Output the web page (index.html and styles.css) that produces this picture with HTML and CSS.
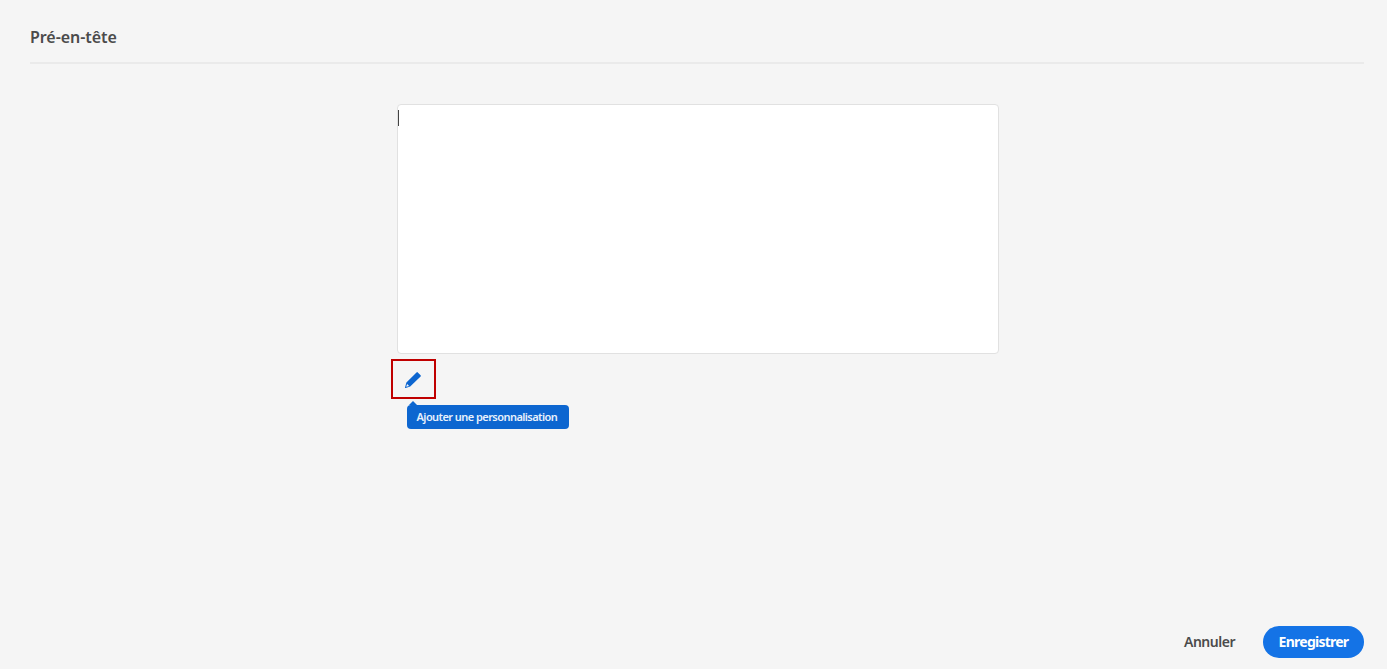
FILE: index.html
```html
<!DOCTYPE html>
<html lang="fr">
<head>
<meta charset="utf-8">
<title>Pré-en-tête</title>
<link rel="stylesheet" href="styles.css">
</head>
<body>
<main class="dialog">
  <header class="dialog-header"><h1 class="title">Pré-en-tête</h1></header>
  <section class="editor">
    <div class="text-area" role="textbox"><span class="caret"></span></div>
    <div class="personalize">
      <button class="edit-button" aria-label="Ajouter une personnalisation">
        <svg class="pencil" width="18" height="18" viewBox="0 0 18 18">
          <path fill="#0d66d0" fill-rule="evenodd" d="M12.5 1.4a.9.9 0 0 1 1.3 0l2.8 2.8a.9.9 0 0 1 0 1.3L6.2 15.6 1.6 17a.5.5 0 0 1-.6-.6L2.4 11.5zM3.1 12.9l-.9 2.9 2.9-.9z"/>
        </svg>
      </button>
      <div class="tooltip" role="tooltip"><span class="tooltip-label">Ajouter une personnalisation</span></div>
    </div>
  </section>
  <footer class="actions">
    <button class="cancel"><span class="cancel-label">Annuler</span></button>
    <button class="save"><span class="save-label">Enregistrer</span></button>
  </footer>
</main>
</body>
</html>
```
FILE: styles.css
```css
* { box-sizing: border-box; }
body {
  margin: 0;
  background: #f5f5f5;
  font-family: "Noto Sans", "Open Sans", sans-serif;
  color: #4b4b4b;
}
button { font-family: inherit; border: 0; background: none; padding: 0; white-space: nowrap; }
.dialog {
  display: flex;
  flex-direction: column;
  height: 669px;
  padding: 0 23px 11px 30px;
}
.dialog-header {
  height: 64px;
  padding-top: 25px;
  border-bottom: 2px solid #eaeaea;
}
.title { width: max-content; margin: 0; font-size: 16px; line-height: 24px; font-weight: 600; letter-spacing: -0.05px; }
.editor { width: 602px; margin: 40px 0 0 367px; }
.text-area {
  height: 250px;
  padding-top: 5px;
  background: #fff;
  border: 1px solid #e1e1e1;
  border-radius: 4px;
}
.caret { display: block; width: 1px; height: 16px; background: #444; }
.personalize {
  position: relative;
  width: 45px;
  margin: 5px 0 0 -6px;
}
.edit-button {
  display: flex;
  align-items: center;
  justify-content: center;
  width: 45px;
  height: 40px;
  padding: 2px 1px 0 0;
  border: 2px solid #c00000;
}
.tooltip {
  position: absolute;
  left: 16px;
  top: 46px;
  height: 24px;
  width: 162px;
  padding-left: 9.5px;
  border-radius: 4px;
  background: #0d66d0;
  color: #e8f1fc;
  font-size: 11px;
  line-height: 24px;
  font-weight: 600;
  letter-spacing: -0.56px;
  white-space: nowrap;
}
.tooltip::before {
  content: "";
  position: absolute;
  left: 2px;
  top: -4px;
  border: solid transparent;
  border-width: 0 4px 4px;
  border-bottom-color: #0d66d0;
}
.actions {
  display: flex;
  justify-content: flex-end;
  align-items: center;
  margin-top: auto;
  gap: 28px;
  height: 32px;
}
.cancel, .save { font-size: 14px; line-height: 32px; }
.cancel { width: 51px; color: #4b4b4b; font-weight: 600; letter-spacing: -0.5px; }
.save {
  width: 101px;
  height: 32px;
  border-radius: 16px;
  background: #1473e6;
  color: #fff;
  font-weight: 700;
  letter-spacing: -0.75px;
}
```
